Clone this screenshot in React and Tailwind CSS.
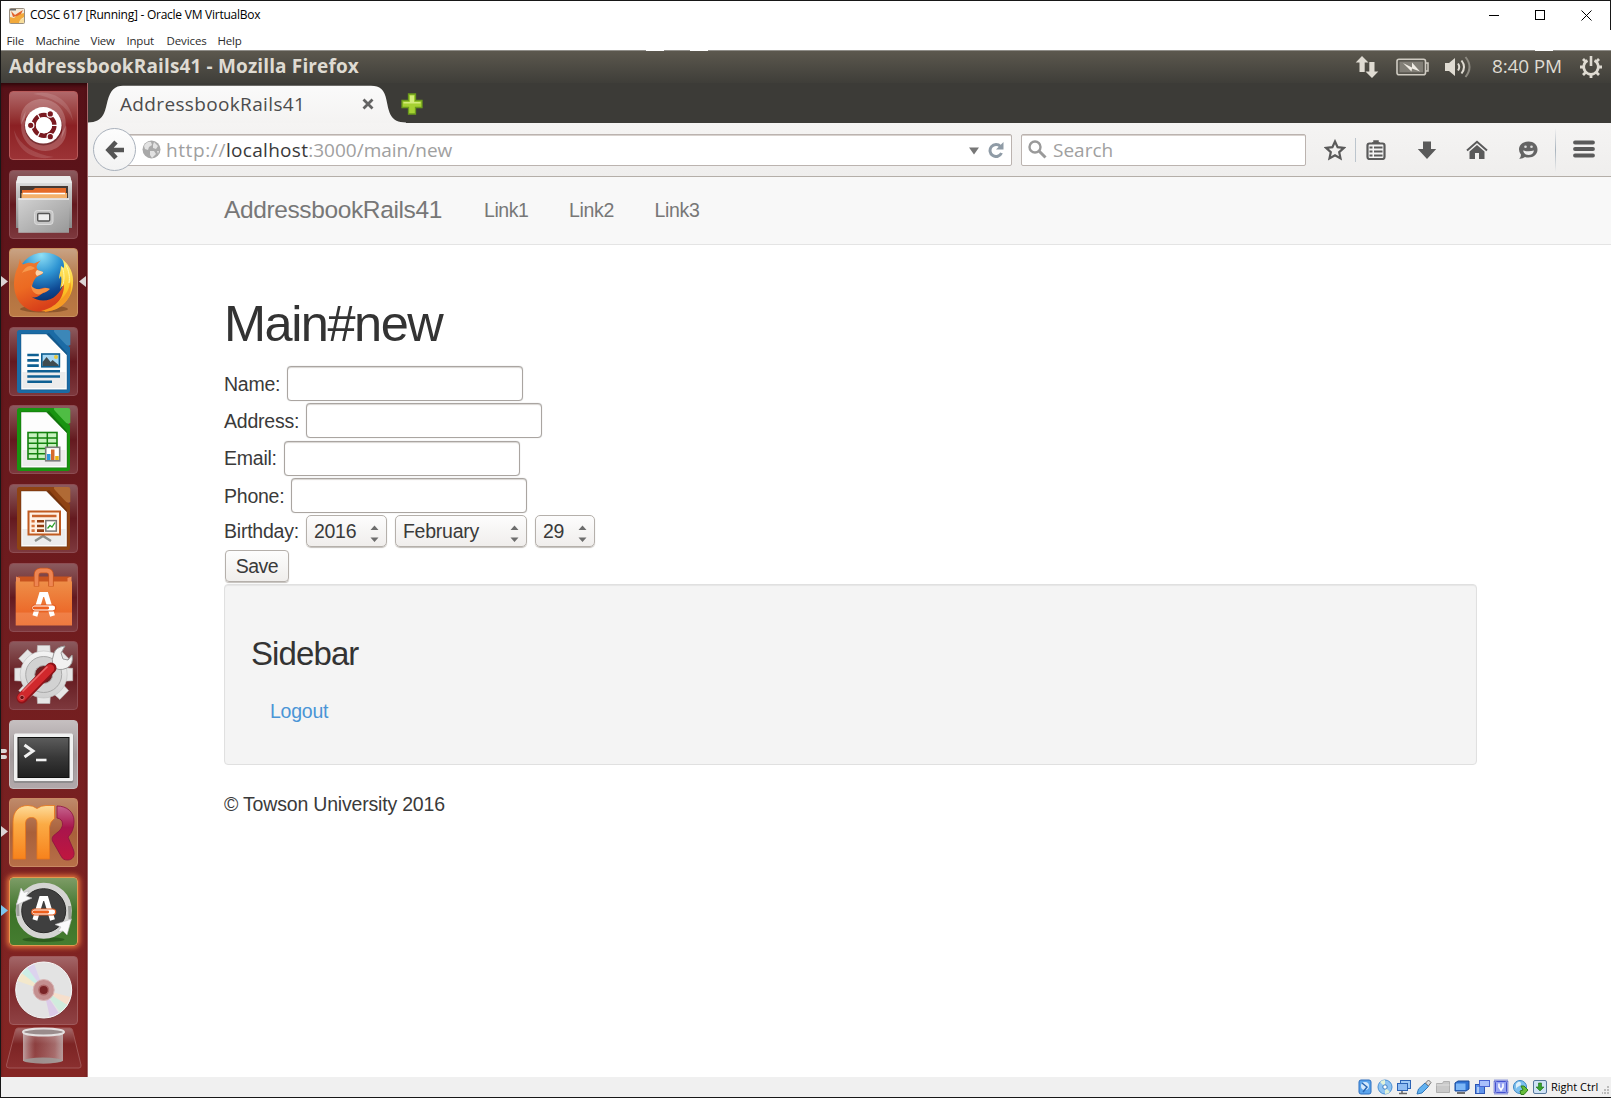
import React from "react";

const UBUNTU = "font-['Open_Sans','Noto_Sans',sans-serif]";
const HELV = "font-['Liberation_Sans',Arial,sans-serif]";

/* ---------- host window ---------- */

function TitleBar() {
  return (
    <div className="flex h-[29px] shrink-0 items-center bg-white pl-2 text-black">
      <svg width="16" height="16" viewBox="0 0 16 16" className="mr-[5px]">
        <rect x="0.5" y="0.5" width="15" height="15" rx="1" fill="#f3ead9" stroke="#9a8f80" />
        <path d="M1 1h6v1.500H1z" fill="#666" />
        <path d="M1 15V9l4 1 3-3 7-2v4l-3 2-2 4z" fill="#f2a93b" />
        <path d="M2 3l4 4 3-2 5-3-2 4-4 2-4 1z" fill="#e2622a" />
        <path d="M10 15l1-3 4-2v5z" fill="#f7dd9b" />
      </svg>
      <span className="mb-[2px] text-[12px] leading-4 tracking-[-0.25px]">COSC 617 [Running] - Oracle VM VirtualBox</span>
      <div className="ml-auto flex items-center gap-[35px] pr-[18px]">
        <svg width="11" height="11" viewBox="0 0 11 11" shapeRendering="crispEdges"><path d="M0 5.500h10" stroke="#000" /></svg>
        <svg width="11" height="11" viewBox="0 0 11 11" shapeRendering="crispEdges"><rect x=".5" y=".5" width="9" height="9" fill="none" stroke="#000" /></svg>
        <svg width="11" height="11" viewBox="0 0 11 11"><path d="M.5.5l10 10M10.500.5l-10 10" stroke="#000" /></svg>
      </div>
    </div>
  );
}

function MenuBar() {
  return (
    <div className="flex h-5 shrink-0 items-center bg-white pt-px pl-[5.5px] text-[11.5px] leading-4 tracking-[-0.2px] text-[#2b2b2b]">
      <span className="w-[29px]">File</span>
      <span className="w-[55px]">Machine</span>
      <span className="w-[36px]">View</span>
      <span className="w-[40px]">Input</span>
      <span className="w-[51px] tracking-[-0.1px]">Devices</span>
      <span>Help</span>
    </div>
  );
}

function StatusBar() {
  const c = "h-4 w-4";
  return (
    <div className="flex h-[20px] shrink-0 items-center justify-end bg-[#f0f0f0] text-black">
      <div className="flex gap-[3.4px]">
        <svg viewBox="0 0 16 16" className={c}>
          <rect x="2" y="1" width="12" height="14" rx="2" fill="#5ba4ec" stroke="#2d6fc0" />
          <circle cx="8" cy="7" r="4" fill="#d5e9fb" /><path d="M5 4l5 4-4 5" fill="none" stroke="#2867b5" strokeWidth="1.5" />
        </svg>
        <svg viewBox="0 0 16 16" className={c}>
          <circle cx="8" cy="8" r="7" fill="#8fc4f2" stroke="#4a90d4" /><path d="M8 8L3 3a7 7 0 0 1 5-2zM8 8l5 5a7 7 0 0 1-5 2z" fill="#e2f2d8" />
          <circle cx="8" cy="8" r="2.200" fill="#fff" stroke="#3c7fc0" />
        </svg>
        <svg viewBox="0 0 16 16" className={c}>
          <rect x="4.500" y="1.500" width="10" height="8" fill="#9fc9f5" stroke="#2c63b5" /><rect x="1.500" y="4.500" width="10" height="7" fill="#8fbcf2" stroke="#2c63b5" />
          <path d="M3 14.500h8M6 12v2" stroke="#666" strokeWidth="1.5" />
        </svg>
        <svg viewBox="0 0 16 16" className={c}>
          <path d="M1 15l1.500-5L9 4l3.500 3.500L6 14z" fill="#62b1ef" stroke="#2f77bd" /><path d="M9.500 4l3-3L15 3.500l-2.500 3.500z" fill="#ddd" stroke="#777" />
        </svg>
        <svg viewBox="0 0 16 16" className={c}>
          <path d="M1.500 13.500v-9h6l1-2h6v11z" fill="#c9c9c9" stroke="#b0b0b0" /><path d="M1.500 6h13" stroke="#ddd" />
        </svg>
        <svg viewBox="0 0 16 16" className={c}>
          <path d="M1 4l3-2h11v8l-3 2H1z" fill="#2f72d3" stroke="#1d4d9b" /><rect x="2" y="4.500" width="9.500" height="6.500" fill="#7db7f7" /><path d="M3 14h8" stroke="#444" strokeWidth="1.500" />
        </svg>
        <svg viewBox="0 0 16 16" className={c}>
          <rect x="1.500" y="5.500" width="9" height="9" fill="#5f93ea" stroke="#2b55b3" /><rect x="5.500" y="1.500" width="10" height="6" fill="#a9c0fb" stroke="#4a64d0" /><path d="M4 8v6" stroke="#fff" />
        </svg>
        <svg viewBox="0 0 16 16" className={c}>
          <rect x="1.500" y="1.500" width="13" height="13" fill="none" stroke="#3f4ccc" strokeWidth="2" strokeDasharray="1 1" /><rect x="2.500" y="2.500" width="11" height="11" rx="1" fill="#97a4f2" stroke="#4452cf" />
          <path d="M6 4.500V8l2 3 2-3V4.500" fill="none" stroke="#fff" strokeWidth="1.600" />
        </svg>
        <svg viewBox="0 0 16 16" className={c}>
          <circle cx="7" cy="8" r="6.500" fill="#7cc0ee" stroke="#3b86c4" /><path d="M3 5c3-4 5-2 5 0s-4 2-5 5z" fill="#dcf0fb" />
          <path d="M7 12l3-1-2-4h3l4 4-4 4.500H8z" fill="#66bd3a" stroke="#2d7d1a" />
        </svg>
        <svg viewBox="0 0 16 16" className={c}>
          <rect x="1.500" y="1.500" width="13" height="13" rx="1.500" fill="#cfe2f5" stroke="#56789c" /><path d="M8 12l-4-4h2.500V4h3v4H12z" fill="#36a12c" stroke="#1c6d16" strokeWidth=".6" />
        </svg>
      </div>
      <span className="ml-[3px] w-[51px] text-[11px] leading-4 whitespace-nowrap">Right Ctrl</span>
      <svg width="9" height="20" viewBox="0 0 9 20" className="text-[#bcbcbc]" fill="currentColor">
        <path d="M5 9h2v2H5zM5 12h2v2H5zM2 12h2v2H2zM5 15h2v2H5zM2 15h2v2H2zM-1 15h2v2h-2z" />
      </svg>
    </div>
  );
}

/* ---------- Ubuntu top panel ---------- */

function TopPanel() {
  return (
    <div className={`relative flex h-[33px] shrink-0 items-center border-t border-[#908e89] bg-linear-to-b from-[#5c584e] to-[#3f3e39] pl-2 text-[19px] text-[#dfdbd2] ${UBUNTU}`}>
      <div className="absolute -top-px left-[645px] h-px w-[18px] bg-white" />
      <div className="absolute -top-px left-[689px] h-px w-[18px] bg-white" />
      <div className="absolute -top-px left-[1534px] h-px w-[18px] bg-white" />
      <div className="mb-[2px] text-[19px] leading-7 font-bold tracking-[0.14px] whitespace-nowrap">AddressbookRails41 - Mozilla Firefox</div>
      <div className="ml-auto flex h-8 items-center">
        <svg width="24" height="24" viewBox="0 0 24 24" fill="#dfdbd2" className="mr-[17px]">
          <path d="M7 1l6.500 6.500h-3.800V17H4.500V7.500H.7zM17 23l-6.500-6.500h3.800V7h5.200v9.500h3.800z" />
        </svg>
        <svg width="33" height="18" viewBox="0 0 33 18" className="mr-4">
          <rect x="1" y="1.200" width="28.500" height="15.600" rx="2" fill="#59574f" stroke="#cfcbc2" strokeWidth="1.600" />
          <rect x="3.500" y="3.700" width="23.500" height="10.600" fill="#827f77" />
          <path d="M30 5h2v8h-2" fill="none" stroke="#cfcbc2" strokeWidth="1.500" />
          <path d="M7 5l9 4.500V4.500L24 13.500l-8-3-.5 3z" fill="#f0ece4" />
        </svg>
        <svg width="28" height="24" viewBox="0 0 28 24" className="mr-[19px]" fill="none" strokeWidth="2">
          <path d="M0 8h4l6-5v18l-6-5H0z" fill="#dfdbd2" />
          <path d="M13 8.500q2.500 3.500 0 7" stroke="#dfdbd2" /><path d="M16.500 5.500q5 6.500 0 13" stroke="#dfdbd2" />
          <path d="M20.500 2q8 10 0 20" stroke="#8c8980" />
        </svg>
        <span className="mb-[2px] w-[87px] leading-7 tracking-[-0.15px] whitespace-nowrap">8:40 PM</span>
        <svg width="24" height="24" viewBox="0 0 24 24" className="mr-2" fill="none" stroke="#dfdbd2">
          <path d="M8.500 5.500a7.300 7.300 0 1 0 7 0" strokeWidth="2.600" />
          <path d="M12 1v10" strokeWidth="2.600" />
          <path d="M12 19v4M1 12h4M19 12h4M4 4l3 3M20 4l-3 3M4 20l3-3M20 20l-3-3" strokeWidth="2.800" />
        </svg>
      </div>
    </div>
  );
}

/* ---------- launcher icons, drawn on a 69px tile ---------- */

function Svg({ children }) {
  return <svg width="69" height="69" viewBox="0 0 69 69" className="block overflow-visible">{children}</svg>;
}

const DashIcon = () => (
  <Svg>
    <path d="M12 34C8 12 30 2 46 12c12 8 14 24 6 36 4-14-2-26-14-30-10-3-20 2-26 16z" fill="#fff" opacity=".2" />
    <path d="M24 3C44-2 62 10 64 30 58 14 44 6 24 3z" fill="#fff" opacity=".12" />
    <path d="M57 34c4 22-18 32-34 22C11 48 9 32 17 20c-4 14 2 26 14 30 10 3 20-2 26-16z" fill="#fff" opacity=".2" />
    <path d="M45 66C25 71 7 59 5 39c6 16 20 24 40 27z" fill="#fff" opacity=".12" />
    <circle cx="34.500" cy="35.500" r="19" fill="#4b0d12" opacity=".5" />
    <circle cx="34.300" cy="34.300" r="18.300" fill="#fff" />
    <circle cx="35" cy="34.300" r="10.400" fill="none" stroke="#7b1a20" strokeWidth="4.400" />
    <g stroke="#fff" strokeWidth="1.300"><path d="M35 34.300L49.500 34.300M35 34.300L27.800 21.800M35 34.300L27.800 46.800" /></g>
    <circle cx="35" cy="34.300" r="8" fill="#fff" />
    <g fill="#7b1a20" stroke="#fff" strokeWidth="1.200"><circle cx="41.300" cy="22.900" r="3.200" /><circle cx="21.700" cy="34.300" r="3.200" /><circle cx="41.300" cy="45.700" r="3.200" /></g>
  </Svg>
);

const FilesIcon = () => (
  <Svg>
    <defs>
      <linearGradient id="cab" x1="0" y1="0" x2="0" y2="1"><stop offset="0" stopColor="#f0f0f0" /><stop offset=".3" stopColor="#c4c4c4" /><stop offset="1" stopColor="#8a8a8a" /></linearGradient>
      <linearGradient id="cabf" x1="0" y1="0" x2="1" y2="1"><stop offset="0" stopColor="#d2d2d2" /><stop offset="1" stopColor="#989898" /></linearGradient>
    </defs>
    <path d="M9 6h52l2 7v45H7V13z" fill="url(#cab)" />
    <path d="M9 6h52l2 7H7z" fill="#ececec" />
    <rect x="11" y="16" width="48" height="14" fill="#453a35" />
    <path d="M13 20h11l2-2h31v11H13z" fill="#e46a28" />
    <path d="M12.500 23h45.500v5H12.500z" fill="#f3b06a" /><path d="M14 23.500h42" stroke="#fff" strokeWidth="1.300" />
    <rect x="9.300" y="28.300" width="50.700" height="34.500" fill="url(#cabf)" />
    <path d="M9.300 29h50.700" stroke="#eee" strokeWidth="1.500" />
    <rect x="25.500" y="40.500" width="18.500" height="14" rx="3" fill="#c6c6c6" stroke="#dcdcdc" />
    <rect x="28.700" y="43.500" width="12" height="7.500" rx="1" fill="#eee" stroke="#555" strokeWidth="1.400" />
  </Svg>
);

const FirefoxIcon = () => (
  <Svg>
    <defs>
      <radialGradient id="globe" cx=".45" cy=".05" r=".9"><stop offset="0" stopColor="#8fe0f6" /><stop offset=".4" stopColor="#2f95d3" /><stop offset=".75" stopColor="#0f4a94" /><stop offset="1" stopColor="#0a2a62" /></radialGradient>
      <linearGradient id="fox" x1="0" y1="0" x2=".4" y2="1"><stop offset="0" stopColor="#ef7d33" /><stop offset=".55" stopColor="#ec6a22" /><stop offset="1" stopColor="#d8401a" /></linearGradient>
      <linearGradient id="tail" x1="0" y1="0" x2="0" y2="1"><stop offset="0" stopColor="#fff27a" /><stop offset=".6" stopColor="#fbc425" /><stop offset="1" stopColor="#f0801d" /></linearGradient>
    </defs>
    <ellipse cx="35" cy="61" rx="24" ry="3.500" fill="#5a2e12" opacity=".45" />
    <circle cx="35" cy="31.500" r="27" fill="url(#globe)" />
    <path d="M53 11c8 6 12 15 11 25-1 15-12 26-28 28l-2-9c12-1 18-7 20-18l-3 4c1-5 2-9 1-13l-2 3c0-5 2-8 2-13l3 2c0-3 0-6-2-9z" fill="url(#tail)" />
    <path d="M11 10.500c0 2 1 4 3 6 4-2 8-2 11-1l7-3c-4 3-5 6-4 8 1 3 5 2 6 4 0 2-4 3-7 5-3 4-4 7-4 10 2 2 5 3 9 1 3-1 6-1 8 1-2 3-6 3-8 5-4 3-7 4-10 2 8 6 19 5 25-1 4-4 6-7 8-12 1 14-10 28-24 28C15 64 5.500 52 5 37 5 29 7 22 9 19z" fill="url(#fox)" />
    <path d="M26 20c-2-1-3-2-5-2-3 0-6 3-8 7 5-3 9-2 13-5z" fill="#f9a155" opacity=".8" />
    <path d="M28 22c2 1 5 1 6 2s-3 3-6 4q-3-3 0-6z" fill="#fbd3a8" />
    <path d="M22 37c3 5 9 5 14 3 2 0 4 0 5 1-3 3-6 3-9 5-5 2-10-3-10-9z" fill="#f79042" />
    <path d="M50 53c7-5 11-13 11-20 3 9-1 20-10 26-6 4-13 5-19 4 8-2 13-5 18-10z" fill="#f59a24" />
    <path d="M57 17c3 6 4 12 3 18M53.500 20c2 6 2 12 0 18" stroke="#fff6a8" strokeWidth="1" fill="none" />
  </Svg>
);

function DocFrame({ a, b, c, children }) {
  return (
    <Svg>
      <path d="M10.500 3H45l16 17.500v43a2.500 2.500 0 0 1-2.500 2.500h-48A2.500 2.500 0 0 1 8 63.500v-58A2.500 2.500 0 0 1 10.500 3z" fill={a} />
      <path d="M45.500 3H59a2.300 2.300 0 0 1 2.300 2.300V18q-3 2-6-2L46 6q-2-2-.5-3z" fill={b} />
      <path d="M12 7h25.500L58 28v34.700H12z" fill="#fdfdfd" />
      <path d="M13.500 61V45h43v16z" fill="#ececec" />
      <path d="M12 7h25.500L58 28v34.700H12z" fill="none" stroke={c} strokeOpacity=".4" />
      <path d="M37.500 7L58 28V26L40 6z" fill={c} opacity=".5" />
      {children}
    </Svg>
  );
}

const WriterIcon = () => (
  <DocFrame a="#1b6ba5" b="#3c87b8" c="#0b4776">
    <path d="M18.300 28h11.500M18.300 33.400h11.500M18.300 38.600h11.500M18.300 44.200H51M18.300 49.500H51M18.300 54.800H43" stroke="#0e5f92" strokeWidth="2.600" />
    <rect x="32.800" y="27" width="17.600" height="12.800" fill="#a8d8f3" stroke="#0e5f92" strokeWidth="1.600" />
    <circle cx="47" cy="30" r="2" fill="#e8c93c" />
    <path d="M33.600 39v-4l4-5 4 5 2-2 6 5v1z" fill="#404c50" />
  </DocFrame>
);

const CalcIcon = () => (
  <DocFrame a="#189410" b="#4fbd44" c="#0a5c06">
    <rect x="19" y="27.500" width="29" height="26.500" fill="#c8f2c0" stroke="#14820e" strokeWidth="1.600" />
    <path d="M19 33h29M19 38.300h29M19 43.500h29M19 48.700h29M28.600 27.500V54M38.300 27.500V54" stroke="#14820e" strokeWidth="1.500" />
    <rect x="36.700" y="42.300" width="14" height="13.500" fill="#fff" stroke="#7d7d7d" strokeWidth="1.600" />
    <path d="M38 49h3.500v6H38z" fill="#2c96dd" /><path d="M42 44.500h3.500V55H42z" fill="#d4692c" /><path d="M46.200 51h3.500v4h-3.500z" fill="#e9b312" />
  </DocFrame>
);

const ImpressIcon = () => (
  <DocFrame a="#8f4313" b="#b06a35" c="#5a2405">
    <path d="M34.500 51v2M26 57l8-5 8 5" stroke="#8b8f8b" strokeWidth="2.400" fill="none" />
    <rect x="19.500" y="27.500" width="31.500" height="23" fill="#fff1e5" stroke="#c05a20" strokeWidth="2" />
    <path d="M23 32h24.500" stroke="#c8622a" strokeWidth="2.500" />
    <path d="M22.500 37.300h3.200M22.500 42h3.200M22.500 46.600h3.200" stroke="#d7743c" strokeWidth="2.600" />
    <path d="M28 37.300h7M28 42h7M28 46.600h7" stroke="#8f3b10" strokeWidth="2.600" />
    <rect x="36.800" y="36.600" width="10.500" height="10.500" fill="#fff" stroke="#777" strokeWidth="1.500" />
    <path d="M38.500 44.500l2.500-3 2 1.500 3-4.500" fill="none" stroke="#2ba02b" strokeWidth="1.300" />
  </DocFrame>
);

/* compass-and-ruler emblem shared by the software centre and the updater */
function Emblem({ x, y }) {
  return (
    <g transform={`translate(${x} ${y})`}>
      <path d="M-8.800 12L-2.300-9.500h4.600L8.800 12" fill="none" stroke="#fff" strokeWidth="5" />
      <rect x="-12" y="1" width="24" height="6" rx="3" fill="#fff" stroke="#e45a1c" strokeWidth="1.200" />
      <path d="M-9.500 4H4" stroke="#ef5f1c" strokeWidth="2.800" strokeLinecap="round" />
    </g>
  );
}

const SoftwareIcon = () => (
  <Svg>
    <defs><linearGradient id="bag" x1="0" y1="0" x2="0" y2="1"><stop offset="0" stopColor="#ee8e48" /><stop offset=".7" stopColor="#ec6a2a" /><stop offset=".71" stopColor="#f08048" /><stop offset="1" stopColor="#ee7a40" /></linearGradient></defs>
    <path d="M9 13.500h52l1.500 6H7z" fill="#c8531f" />
    <path d="M7 13.500l4 1.500v4H7zM62.500 13.500l-4 1.500v4h4z" fill="#ef8a56" />
    <rect x="6.700" y="18.500" width="56.300" height="44" fill="url(#bag)" />
    <path d="M27.500 23.500V12q0-4 4-4.500h6.500q4 .5 4 4.500v11.500" fill="none" stroke="#c9561f" strokeWidth="5.500" />
    <path d="M27.500 23V12q0-4 4-4.500h6.500q4 .5 4 4.500v11" fill="none" stroke="#ee8552" strokeWidth="3.800" />
    <Emblem x={34.700} y={41} />
  </Svg>
);

const SettingsIcon = () => {
  const teeth = [0, 45, 90, 135, 180, 225, 270, 315];
  return (
    <Svg>
      <defs><linearGradient id="gear" x1="0" y1="0" x2="0" y2="1"><stop offset="0" stopColor="#f4f4f4" /><stop offset="1" stopColor="#cfcfcf" /></linearGradient></defs>
      <g fill="url(#gear)" stroke="#bdbdbd" strokeWidth=".6">
        {teeth.map((d) => <path key={d} d="M28 14L28.500 4.500h12.400L41.400 14z" transform={`rotate(${d} 34.700 33.500)`} fill="#e6e6e6" />)}
        <circle cx="34.700" cy="33.500" r="23.500" />
      </g>
      <circle cx="34.700" cy="33.500" r="18" fill="#d2d2d2" stroke="#aaa" />
      <circle cx="34.700" cy="33.500" r="9" fill="#6d1f22" stroke="#a9a9a9" />
      <path d="M42 26L52 17" stroke="#d9d9d9" strokeWidth="10" />
      <path d="M45 12q2-6 11-7l-4 7 2 6 5 1 4-5q2 9-5 13-9 4-14-2-2-6 1-13z" fill="#f1f1f1" stroke="#9b9b9b" />
      <path d="M13 57L42 27" stroke="#8e1218" strokeWidth="11" strokeLinecap="round" />
      <path d="M12.500 56.500L41 27.500" stroke="#d0282c" strokeWidth="8.500" strokeLinecap="round" />
      <path d="M14 50L38 26" stroke="#e9696a" strokeWidth="1.600" strokeLinecap="round" />
      <circle cx="13" cy="56.500" r="2.200" fill="#6b1114" stroke="#e88" strokeWidth=".7" />
    </Svg>
  );
};

const TerminalIcon = () => (
  <Svg>
    <defs><linearGradient id="term" x1="0" y1="0" x2="0" y2="1"><stop offset="0" stopColor="#5c5c5c" /><stop offset=".5" stopColor="#383838" /><stop offset="1" stopColor="#1f1f1f" /></linearGradient></defs>
    <rect x="4.500" y="14" width="60" height="49" rx="2" fill="#8f8d8e" />
    <rect x="5" y="13.500" width="59" height="47.500" rx="1.500" fill="#f1f1f1" />
    <rect x="9" y="17.500" width="51" height="40" fill="url(#term)" stroke="#111" />
    <path d="M15.500 25l8.500 6-8.500 6" fill="none" stroke="#f2f2f2" strokeWidth="3" />
    <path d="M27 40h10.500" stroke="#f2f2f2" strokeWidth="2.600" />
  </Svg>
);

const RubyMineIcon = () => (
  <Svg>
    <defs>
      <linearGradient id="mm" x1="0" y1="0" x2="0" y2="1"><stop offset="0" stopColor="#fddb9a" /><stop offset=".35" stopColor="#fbab45" /><stop offset="1" stopColor="#f7821c" /></linearGradient>
      <linearGradient id="rr" x1="0" y1="0" x2="0" y2="1"><stop offset="0" stopColor="#c5648e" /><stop offset=".4" stopColor="#a8154c" /><stop offset="1" stopColor="#c0163f" /></linearGradient>
    </defs>
    <path d="M4 61V24C4 13 10 7.500 19 7.500q5 0 9 3 4-3 9-3h8.500v13q-4.500 3-5 9V61H28V25q0-5.500-5.500-5.500T16.500 25v36z" fill="url(#mm)" stroke="#e8761b" strokeWidth=".8" />
    <path d="M48 8c10 0 17 6 17 15 0 7-2 12-6 16l5.500 13c2 6-1 10-6 10-3 0-5-1-6.500-4L43.500 43c-1-3 0-5 3-7 4-3 7-6 7-10q0-5-5.500-6z" fill="url(#rr)" stroke="#8b1240" strokeWidth=".8" />
  </Svg>
);

const UpdaterIcon = () => (
  <Svg>
    <ellipse cx="34.500" cy="62.500" rx="21" ry="2.500" fill="#1f4a14" opacity=".6" />
    <circle cx="34.700" cy="33.700" r="24.800" fill="none" stroke="#d4d4d2" strokeWidth="6.500" />
    <circle cx="34.700" cy="33.700" r="22" fill="#3f3f3f" stroke="#2a2a2a" />
    <path d="M9 39L8.500 26M60.500 29l.5 13" stroke="#9d9f9b" strokeWidth="3" />
    <path d="M7.500 28L12 11l3 4.500 5-1.500-3 5 6 2z" fill="#fafafa" stroke="#bbb" strokeWidth=".6" />
    <path d="M62.500 42L58 58l-4-4-5 .5 3-4.500-6-2.500z" fill="#fafafa" stroke="#bbb" strokeWidth=".6" />
    <Emblem x={34.700} y={31} />
  </Svg>
);

const DiscIcon = () => (
  <Svg>
    <circle cx="34.700" cy="35" r="28.300" fill="#6a3a3a" opacity=".5" />
    <circle cx="34.700" cy="34" r="28" fill="#e3e3e3" />
    <path d="M34.700 34L11 18.500a28 28 0 0 1 8-8z" fill="#cdeee6" /><path d="M34.700 34L8.500 25a28 28 0 0 1 4-8z" fill="#f3e8cc" />
    <path d="M34.700 34L18 11.500a28 28 0 0 1 7-4z" fill="#dcd3ee" />
    <path d="M34.700 34L58.500 49a28 28 0 0 1-7 7.500z" fill="#d0ecdd" /><path d="M34.700 34L61.500 41a28 28 0 0 1-3 8z" fill="#f6dfcc" /><path d="M34.700 34L50 57.500a28 28 0 0 1-9 4z" fill="#dccbe8" />
    <circle cx="34.700" cy="34" r="28" fill="none" stroke="#f8f8f8" />
    <circle cx="34.700" cy="34" r="10.500" fill="#c48f8f" stroke="#d9b5b5" />
    <circle cx="34.700" cy="34" r="4.800" fill="#7a2426" stroke="#b06a6a" strokeWidth="1.500" />
  </Svg>
);

function Pip({ side, color = "#dcd5d5" }) {
  return (
    <svg width="7" height="11" viewBox="0 0 7 11" className={side === "left" ? "absolute top-7 -left-2" : "absolute top-7 -right-2"}>
      <path d={side === "left" ? "M0 0l7 5.500L0 11z" : "M7 0L0 5.500 7 11z"} fill={color} />
    </svg>
  );
}

const GLASS = "border-[#8d4c52] bg-linear-to-b from-[#8b5a5e] via-[#64191f] to-[#7d383d]";
const TILES = [
  { icon: DashIcon, look: "border-[#b85a5a] bg-linear-to-b from-[#b0686a] via-[#8b2023] to-[#9c3336]" },
  { icon: FilesIcon, look: GLASS },
  { icon: FirefoxIcon, look: "border-[#c9915f] bg-linear-to-b from-[#c9a384] via-[#b0713f] to-[#bb7a45]", left: true, right: true },
  { icon: WriterIcon, look: GLASS },
  { icon: CalcIcon, look: GLASS },
  { icon: ImpressIcon, look: GLASS },
  { icon: SoftwareIcon, look: GLASS },
  { icon: SettingsIcon, look: GLASS },
  { icon: TerminalIcon, look: "border-[#c4bdbe] bg-linear-to-b from-[#c5bfc0] via-[#a39a9c] to-[#b1a8aa]", double: true },
  { icon: RubyMineIcon, look: "border-[#c98a64] bg-linear-to-b from-[#bf8a6a] via-[#a9603a] to-[#b76f48]", left: true },
  { icon: UpdaterIcon, look: "border-[#e39a50] bg-linear-to-b from-[#7d9c66] via-[#3c7228] to-[#457d30] shadow-[0_0_5px_2px_#e0713c]", left: true, color: "#7cc6ee" },
  { icon: DiscIcon, look: "border-[#a05a5c] bg-linear-to-b from-[#a36668] via-[#7d282b] to-[#8f4244]" },
];

function Launcher() {
  return (
    <div className="flex w-[87px] shrink-0 flex-col overflow-hidden border-r border-[#a4686a] bg-linear-to-b from-[#571118] to-[#852624] pt-2 pl-2 shadow-[inset_0_4px_4px_-2px_#2a0508]">
      <div className="flex flex-col gap-[9.600px]">
        {TILES.map(({ icon: Icon, look, left, right, double, color }, i) => (
          <div key={i} className="relative h-[69px] w-[69px]">
            <div className={`h-full w-full rounded-[4px] border ${look}`}>
              <div className="-m-px"><Icon /></div>
            </div>
            {left && <Pip side="left" color={color} />}
            {right && <Pip side="right" />}
            {double && (
              <div className="absolute top-[29px] -left-2 flex flex-col gap-[2px]">
                <div className="h-[4px] w-[6px] rounded-r-full bg-[#dcd5d5]" />
                <div className="h-[4px] w-[6px] rounded-r-full bg-[#dcd5d5]" />
              </div>
            )}
          </div>
        ))}
      </div>
      <svg width="76" height="42" viewBox="0 0 76 42" className="mt-[2px] -ml-[3px] shrink-0">
        <defs>
          <linearGradient id="tr" x1="0" y1="0" x2="0" y2="1"><stop offset="0" stopColor="#a56a6a" /><stop offset=".4" stopColor="#7c2424" /><stop offset="1" stopColor="#8a2f2f" /></linearGradient>
          <linearGradient id="can" x1="0" y1="0" x2="1" y2="0"><stop offset="0" stopColor="#ddd" stopOpacity=".65" /><stop offset=".3" stopColor="#caa" stopOpacity=".2" /><stop offset=".8" stopColor="#eee" stopOpacity=".35" /><stop offset="1" stopColor="#ccc" stopOpacity=".7" /></linearGradient>
        </defs>
        <path d="M12 1h52q2 0 2.500 2L75 38q.5 3-2 3H3q-3 0-2.500-3L9.500 3Q10 1 12 1z" fill="url(#tr)" stroke="#a05656" />
        <path d="M17 5v29q21 6 40 0V5z" fill="url(#can)" />
        <ellipse cx="37" cy="33.500" rx="19.500" ry="3" fill="#9fa09d" opacity=".8" />
        <ellipse cx="37.500" cy="5" rx="20.500" ry="3.500" fill="#9a8c8c" stroke="#e4e0e0" strokeWidth="2" />
      </svg>
    </div>
  );
}

/* ---------- Firefox chrome ---------- */

function TabStrip() {
  return (
    <div className={`relative flex h-[40px] shrink-0 items-end bg-[#3c3b37] ${UBUNTU}`}>
      <div className="relative h-[38px] w-[318px]">
        <svg width="318" height="38" viewBox="0 0 318 38" className="absolute inset-0">
          <defs><linearGradient id="tab" x1="0" y1="0" x2="0" y2="1"><stop offset="0" stopColor="#fafafa" /><stop offset="1" stopColor="#f4f3f2" /></linearGradient></defs>
          <path d="M0 37.500C16 37.500 17 26 19.500 16 22.500 5 27 .8 35 .8H283c9 0 13.500 4 15.500 14.500C301 27 302 37.500 318 37.500V38H0z" fill="url(#tab)" />
        </svg>
        <div className="relative flex h-full items-center pb-px pl-8">
          <span className="text-[19px] leading-6 tracking-[0.35px] text-[#4c4c4c]">AddressbookRails41</span>
          <svg width="12" height="12" viewBox="0 0 12 12" className="ml-[57px]">
            <path d="M1.500 1.500l9 9M10.500 1.500l-9 9" stroke="#636363" strokeWidth="2.800" />
          </svg>
        </div>
      </div>
      <svg width="22" height="22" viewBox="0 0 22 22" className="mb-[8px] -ml-[5px]">
        <path d="M7.500 1h7v6.500H21v7h-6.500V21h-7v-6.500H1v-7h6.500z" fill="#a5d132" stroke="#6b9a1c" strokeWidth="1.300" />
        <path d="M9 2.500h4v6.500h6.500v1.500H2.500V9H9z" fill="#d3ec7a" />
      </svg>
    </div>
  );
}

function Toolbar() {
  const ink = "#5a5a5a";
  return (
    <div className={`flex h-[54px] shrink-0 items-center border-b border-[#b4aea8] bg-linear-to-b from-[#f5f4f3] to-[#efeeed] text-[19px] ${UBUNTU}`}>
      <div className="z-10 mr-[-23px] ml-[5px] flex h-[43px] w-[43px] shrink-0 items-center justify-center rounded-full border border-[#a9b1bc] bg-linear-to-b from-[#fdfdfd] to-[#f3f3f3]">
        <svg width="20" height="20" viewBox="0 0 20 20"><path d="M11 2L3.500 10l7.500 8M4 10h15" fill="none" stroke="#555" strokeWidth="4.600" /></svg>
      </div>
      <div className="flex h-[32px] w-[899px] shrink-0 items-center rounded-[2px] border border-[#bbb3af] bg-white pl-[28px] shadow-[inset_0_1px_0_#d8d2ce]">
        <svg width="19" height="19" viewBox="0 0 19 19" className="mr-[5px]">
          <circle cx="9.500" cy="9.500" r="9" fill="#a9a9a9" />
          <path d="M2 6q3-5 7-4l1 3-3 2-1 3-3-1zM12 2l4 4-2 3-3-1 0-3zM8 11l4 0 2 3-4 4-2-3zM15 11l2 0-1 3z" fill="#e2e2e2" />
        </svg>
        <div className="leading-6 whitespace-nowrap text-[#a0a0a0]">
          <span className="tracking-[0.6px]">http://</span><span className="tracking-[0.3px] text-[#3a3a3a]">localhost</span><span>:3000/main/new</span>
        </div>
        <svg width="10" height="8" viewBox="0 0 10 8" className="mt-[3px] ml-auto"><path d="M0 .5h10L5 7.500z" fill="#777" /></svg>
        <svg width="16" height="16" viewBox="0 0 16 16" className="mr-[7px] ml-[9px]">
          <path d="M12.500 4.500A6 6 0 1 0 13.500 11" fill="none" stroke="#8f9ba6" strokeWidth="3" /><path d="M15.500 0v7.500H8z" fill="#8f9ba6" />
        </svg>
      </div>
      <div className="ml-[9px] flex h-[32px] w-[285px] shrink-0 items-center rounded-[2px] border border-[#bbb3af] bg-white pl-[6px] shadow-[inset_0_1px_0_#d8d2ce]">
        <svg width="19" height="19" viewBox="0 0 19 19" className="mr-[6px] mb-[1px]" fill="none" stroke="#9a9a9a">
          <circle cx="7" cy="7" r="5.500" strokeWidth="2.400" /><path d="M11 11l6.500 6.500" strokeWidth="3" />
        </svg>
        <span className="leading-6 text-[#a0a0a0]">Search</span>
      </div>
      <svg width="22" height="22" viewBox="0 0 22 22" className="ml-[18px] shrink-0" fill="none" stroke={ink} strokeWidth="2.200">
        <path d="M11 2.500l2.600 5.700 6.200.7-4.600 4.200 1.300 6.300L11 16.200l-5.500 3.200 1.300-6.300L2.200 8.900l6.200-.7z" />
      </svg>
      <div className="ml-[9px] h-6 w-px shrink-0 bg-[#bcc5cd]" />
      <svg width="20" height="20" viewBox="0 0 20 20" className="ml-[10px] shrink-0">
        <path d="M6 3h2V1h4v2h2" fill={ink} stroke={ink} strokeWidth="1.500" />
        <rect x="1.500" y="3.500" width="17" height="15.500" rx="2" fill="#f4f4f4" stroke={ink} strokeWidth="2.200" />
        <path d="M3.500 7.500h3M8 7.500h8.500M3.500 11.500h3M8 11.500h8.500M3.500 15.500h3M8 15.500h8.500" stroke={ink} strokeWidth="2" />
      </svg>
      <svg width="20" height="20" viewBox="0 0 20 20" className="ml-[31px] shrink-0"><path d="M6 1.500h8V9h5.200L10 19 .8 9H6z" fill={ink} /></svg>
      <svg width="22" height="20" viewBox="0 0 22 20" className="ml-[29px] shrink-0">
        <path d="M1 10.500L11 1.800l10 8.700" fill="none" stroke={ink} strokeWidth="2" /><path d="M11 5l7.500 6.500V19H13v-6H9v6H3.500v-7.500z" fill={ink} />
      </svg>
      <svg width="20" height="20" viewBox="0 0 20 20" className="ml-[30px] shrink-0">
        <path d="M10.500 1.500c5.300 0 9 3.300 9 8s-3.700 8-9 8q-2 0-3.500-.5-2.500 2-5.800 1.700Q3 17 3 14.700 1 12.500 1 9.500c0-4.700 4-8 9.500-8z" fill="#646464" />
        <path d="M5 10.500q5.500 1.500 11 0-1 4.500-5.500 4.500T5 10.500z" fill="#efefef" /><circle cx="7.500" cy="6.800" r="1.300" fill="#ddd" /><circle cx="13.500" cy="6.800" r="1.300" fill="#ddd" />
      </svg>
      <div className="ml-[17px] h-11 w-px shrink-0 bg-linear-to-b from-transparent via-[#a8b3bd] to-transparent" />
      <svg width="22" height="18" viewBox="0 0 22 18" className="mb-[2px] ml-[17px] shrink-0"><path d="M2 2.500h18M2 9h18M2 15.500h18" stroke={ink} strokeWidth="3.800" strokeLinecap="round" /></svg>
    </div>
  );
}

/* ---------- web page ---------- */

function Field({ label }) {
  return (
    <div className="flex h-[37.300px] items-center">
      <label className="mr-[7px]">{label}</label>
      <input className="h-[35px] w-[236px] rounded-[4px] border border-[#aaa5a1] bg-white px-1 shadow-[inset_0_1px_1px_#d9d6d3,0_0_1px_#bbb]" />
    </div>
  );
}

function Select({ value, className }) {
  return (
    <button className={`flex h-8 items-center justify-between rounded-[5px] border border-[#b5b0ab] bg-linear-to-b from-[#fdfdfd] to-[#f0eeec] pr-[7px] pl-[7px] shadow-[0_1px_1px_#c4c0bc] ${className}`}>
      <span>{value}</span>
      <svg width="9" height="19" viewBox="0 0 9 19" fill="#6d6d6d" className="mt-[5px]"><path d="M4.500 1.500L8.500 6H.5zM4.500 18L.5 13.500h8z" /></svg>
    </button>
  );
}

function Page() {
  return (
    <div className={`flex min-h-0 flex-1 flex-col bg-white text-[19.5px] leading-[26px] tracking-[-0.23px] text-[#3a3a3a] ${HELV}`}>
      <nav className="flex h-[68px] shrink-0 items-center border-b border-[#e4e4e4] bg-[#f8f8f8] pb-px pl-[136px] text-[#777]">
        <span className="w-[260px] text-[24.500px] tracking-[-0.380px]">AddressbookRails41</span>
        <span className="w-[85px] tracking-[-0.450px]">Link1</span>
        <span className="w-[85.500px] tracking-[-0.300px]">Link2</span>
        <span className="tracking-[-0.300px]">Link3</span>
      </nav>
      <main className="mr-[134px] ml-[136px]">
        <h1 className="mt-[51px] h-[69px] text-[50.500px] leading-[56px] tracking-[-1.500px] text-[#333]">Main#new</h1>
        <form>
          <Field label="Name:" />
          <Field label="Address:" />
          <Field label="Email:" />
          <Field label="Phone:" />
          <div className="flex h-[35px] items-center pb-px">
            <label className="mr-[7px]">Birthday:</label>
            <Select value="2016" className="mr-[8px] w-[81px]" />
            <Select value="February" className="mr-[8px] w-[132px]" />
            <Select value="29" className="w-[60px]" />
          </div>
          <button className="mt-px ml-px flex h-8 w-[64px] items-center justify-center rounded-[4px] border border-[#b5b0ab] bg-linear-to-b from-[#fdfdfd] to-[#f0eeec] tracking-[-0.500px] shadow-[0_1px_1px_#c4c0bc]">Save</button>
        </form>
        <aside className="mt-[2px] h-[181px] rounded-[4px] border border-[#e0e0e0] bg-[#f4f4f4] pt-[48px] pl-[26px] shadow-[inset_0_1px_1px_rgba(0,0,0,0.06)]">
          <h3 className="text-[33px] leading-[42px] tracking-[-0.900px] text-[#333]">Sidebar</h3>
          <a className="mt-[23px] ml-[19px] block text-[#4a95d6]">Logout</a>
        </aside>
        <footer className="mt-[26px] tracking-[-0.190px]">© Towson University 2016</footer>
      </main>
    </div>
  );
}

export default function App() {
  return (
    <div className="flex h-[1098px] w-[1611px] flex-col overflow-hidden border-t border-b border-l border-[#171717] bg-white font-['Open_Sans','Noto_Sans',sans-serif]">
      <div className="shrink-0 border-r border-[#171717]">
        <TitleBar />
      </div>
      <MenuBar />
      <TopPanel />
      <div className="flex min-h-0 flex-1">
        <Launcher />
        <div className="flex min-w-0 flex-1 flex-col">
          <TabStrip />
          <Toolbar />
          <Page />
        </div>
      </div>
      <StatusBar />
    </div>
  );
}
